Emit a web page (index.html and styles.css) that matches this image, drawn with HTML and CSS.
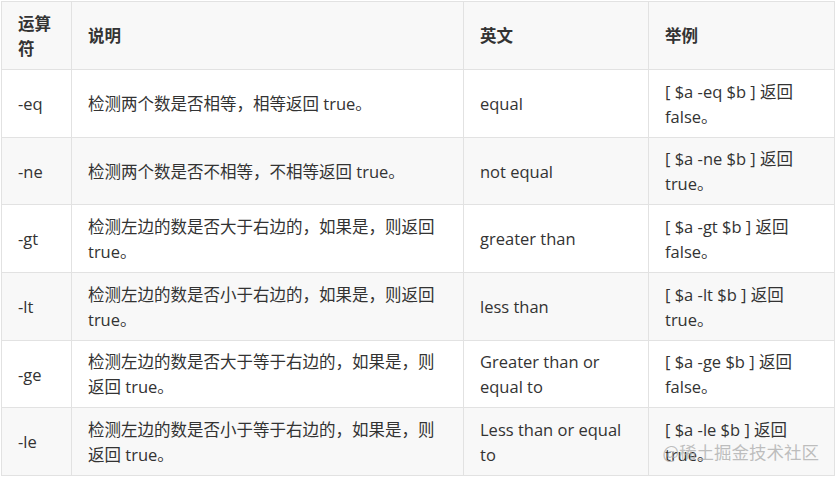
FILE: index.html
```html
<!DOCTYPE html>
<html lang="zh">
<head>
<meta charset="utf-8">
<link rel="stylesheet" href="styles.css">
</head>
<body>
<div class="wrap">
<table class="ops">
  <colgroup>
    <col class="c1"><col class="c2"><col class="c3"><col class="c4">
  </colgroup>
  <thead>
    <tr><th>运算符</th><th>说明</th><th>英文</th><th>举例</th></tr>
  </thead>
  <tbody>
    <tr><td>-eq</td><td>检测两个数是否相等，相等返回 true。</td><td>equal</td><td>[ $a -eq $b ] 返回 false。</td></tr>
    <tr class="short"><td>-ne</td><td>检测两个数是否不相等，不相等返回 true。</td><td>not equal</td><td>[ $a -ne $b ] 返回 true。</td></tr>
    <tr><td>-gt</td><td>检测左边的数是否大于右边的，如果是，则返回 true。</td><td>greater than</td><td>[ $a -gt $b ] 返回 false。</td></tr>
    <tr><td>-lt</td><td>检测左边的数是否小于右边的，如果是，则返回 true。</td><td>less than</td><td>[ $a -lt $b ] 返回 true。</td></tr>
    <tr class="short"><td>-ge</td><td>检测左边的数是否大于等于右边的，如果是，则返回 true。</td><td>Greater than or equal to</td><td>[ $a -ge $b ] 返回 false。</td></tr>
    <tr><td>-le</td><td>检测左边的数是否小于等于右边的，如果是，则返回 true。</td><td>Less than or equal to</td><td>[ $a -le $b ] 返回 true。</td></tr>
  </tbody>
</table>
<div class="mark">@稀土掘金技术社区</div>
</div>
</body>
</html>
```
FILE: styles.css
```css
html, body {
  margin: 0;
  padding: 0;
  background: #fff;
}
.wrap {
  position: relative;
  padding: 1px;
  width: 834px;
}
.ops {
  border-collapse: collapse;
  table-layout: fixed;
  width: 833px;
  font-family: "Open Sans", "Noto Sans CJK SC", sans-serif;
  font-size: 16.5px;
  line-height: 25px;
  color: #333;
}
.c1 { width: 70px; }
.c2 { width: 392px; }
.c3 { width: 185px; }
.c4 { width: 186px; }
.ops th, .ops td {
  border: 1px solid #e2e2e2;
  padding: 0 16px;
  text-align: left;
  vertical-align: middle;
  height: 68px;
  box-sizing: border-box;
}
.ops tr.short td { height: 67px; }
.ops th {
  font-weight: 700;
  background: #f8f8f8;
}
.ops tbody tr:nth-child(even) td {
  background: #f8f8f8;
}
.mark {
  position: absolute;
  right: 17px;
  bottom: 15px;
  font-family: "Noto Sans CJK SC", sans-serif;
  font-size: 17.5px;
  line-height: 20px;
  color: rgba(170, 170, 170, 0.75);
}
```
